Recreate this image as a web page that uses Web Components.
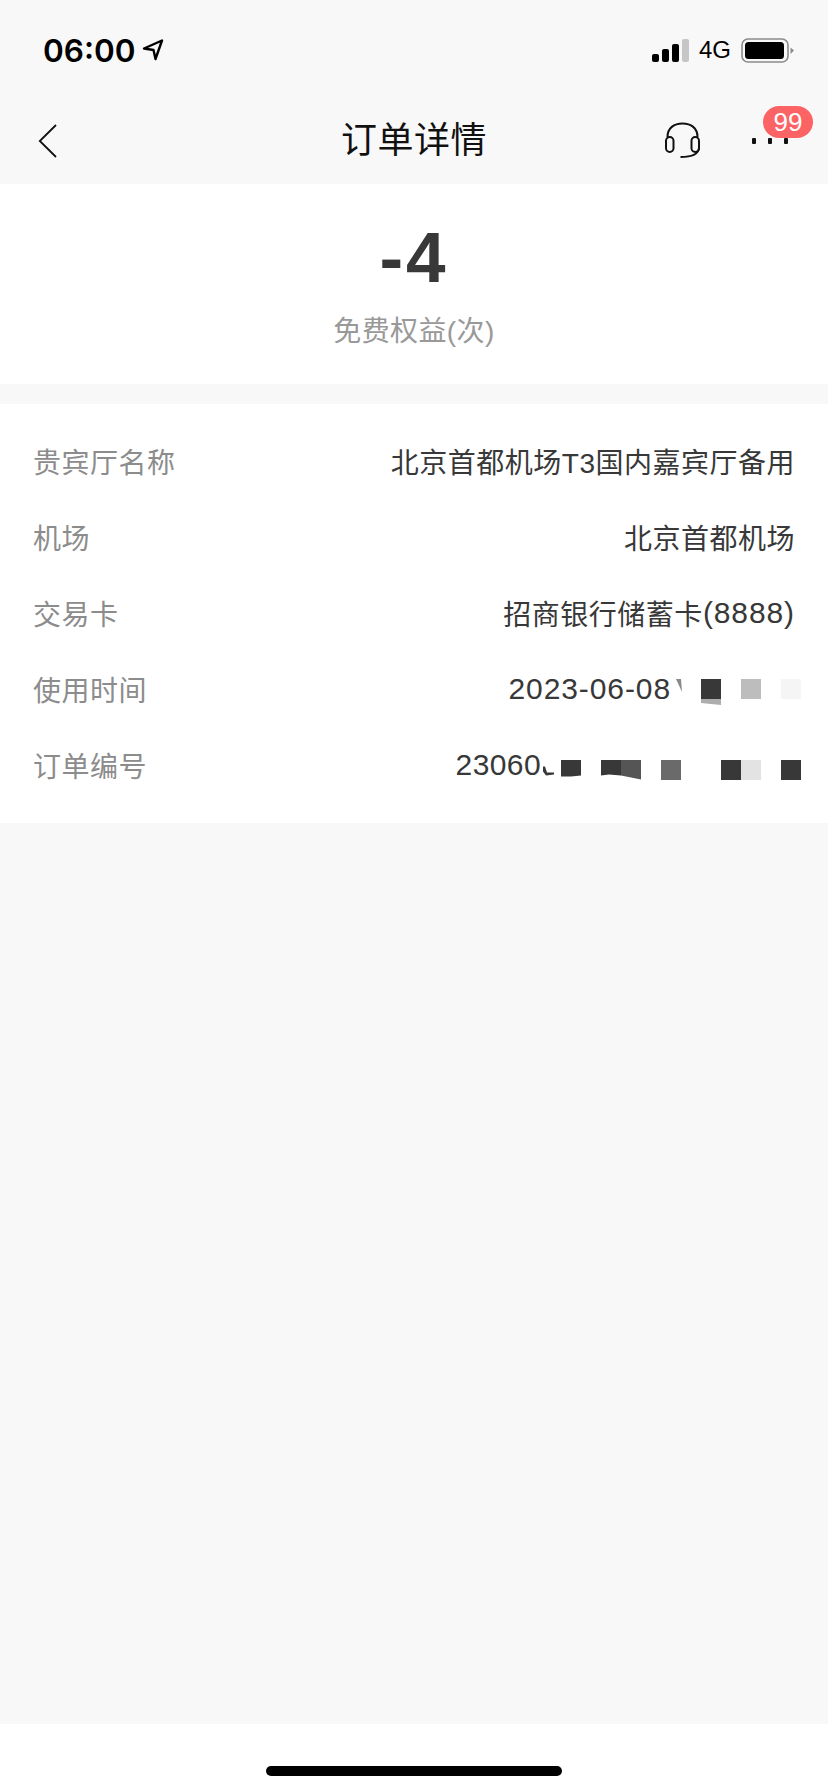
<!doctype html>
<html>
<head>
<meta charset="utf-8">
<style>
  html, body { margin: 0; height: 100%; }
  body {
    font-family: "Liberation Sans", "Noto Sans CJK SC", sans-serif;
    background: #f8f8f8;
  }
  order-page { height: 1792px; }
  .num { font-size: 30px; letter-spacing: .9px; }
  .num.tight { letter-spacing: .4px; }
</style>
</head>
<body>
<order-page>
  <status-bar></status-bar>
  <nav-bar title="订单详情" badge="99"></nav-bar>
  <summary-card amount="-4" caption="免费权益(次)"></summary-card>
  <detail-list>
    <detail-row label="贵宾厅名称">北京首都机场T3国内嘉宾厅备用</detail-row>
    <detail-row label="机场">北京首都机场</detail-row>
    <detail-row label="交易卡">招商银行储蓄卡<span class="num">(8888)</span></detail-row>
    <detail-row label="使用时间"><span class="num">2023-06-08</span><mosaic-strip cells="frag-a dark-b . mid . pale"></mosaic-strip></detail-row>
    <detail-row label="订单编号"><span class="num tight">23060</span><mosaic-strip style="margin-top:9px" cells="frag-b dark-c . dark-d gray5 . gray6 . . dark pale2 . dark"></mosaic-strip></detail-row>
  </detail-list>
  <home-bar></home-bar>
</order-page>

<script>
class OrderPage extends HTMLElement {
  constructor() {
    super();
    this.attachShadow({ mode: "open" }).innerHTML = `
      <style>
        :host { display: flex; flex-direction: column; }
        ::slotted(detail-list) { flex: 1; }
      </style>
      <slot></slot>`;
  }
}

class StatusBar extends HTMLElement {
  constructor() {
    super();
    this.attachShadow({ mode: "open" }).innerHTML = `
      <style>
        :host {
          display: flex; align-items: center; justify-content: space-between;
          height: 100px; padding: 0 33px 0 43px; color: #000;
        }
        .left, .right { display: flex; align-items: center; }
        .time { font-family: Inter, "Liberation Sans", sans-serif; font-size: 31.5px; font-weight: 600; }
        .arrow { margin-left: 6px; display: block; }
        .bars { display: flex; align-items: flex-end; gap: 3px; height: 23px; }
        .bars i { width: 7px; background: #000; border-radius: 2px; }
        .net { font-size: 24px; margin: 0 10px 0 10px; }
      </style>
      <div class="left">
        <span class="time">06:00</span>
        <svg class="arrow" width="22" height="22" viewBox="0 0 22 22" fill="none" stroke="#000" stroke-width="2.4" stroke-linejoin="round">
          <path d="M2 9.500 20 1.500 13.500 20 11.500 11Z"/>
        </svg>
      </div>
      <div class="right">
        <div class="bars">
          <i style="height:8px"></i><i style="height:13px"></i><i style="height:18px"></i><i style="height:23px;background:#c6c6c6"></i>
        </div>
        <span class="net">4G</span>
        <svg width="54" height="25" viewBox="0 0 54 25">
          <rect x="1" y="1" width="46" height="23" rx="6" fill="none" stroke="#8a8a8a" stroke-width="1.6"/>
          <rect x="4" y="4" width="39" height="17" rx="3.5" fill="#000"/>
          <path d="M49.500 9.500 53 12.500 49.500 16Z" fill="#8a8a8a"/>
        </svg>
      </div>`;
  }
}

class NavBar extends HTMLElement {
  constructor() {
    super();
    this.attachShadow({ mode: "open" }).innerHTML = `
      <style>
        :host {
          display: grid; grid-template-columns: 1fr auto 1fr; align-items: center;
          height: 84px; color: #111;
        }
        .back { margin: -2px 0 0 38px; display: block; }
        .title { font-size: 36px; line-height: 50px; margin-top: -2px; letter-spacing: .5px; }
        .actions { display: flex; justify-content: flex-end; align-items: center; position: relative; height: 100%; }
        .service { margin: -4px 51px 0 0; display: block; }
        .more { display: flex; gap: 12px; margin-right: 40px; margin-top: -2px; }
        .more i { width: 4px; height: 6px; background: #111; border-radius: 1px; }
        .badge {
          position: absolute; right: 15px; top: 6px; width: 50px; height: 32px; border-radius: 16px;
          background: #fb6365; color: #fff; font-size: 26px; line-height: 32px; text-align: center;
        }
      </style>
      <svg class="back" width="20" height="34" viewBox="0 0 20 34" fill="none" stroke="#111" stroke-width="1.800">
        <path d="M18 1 1.800 17 18 33"/>
      </svg>
      <div class="title"></div>
      <div class="actions">
        <svg class="service" width="37" height="37" viewBox="0 0 37 37" fill="none" stroke="#111" stroke-width="2">
          <path d="M3.500 15C3.500 6 10 1.500 18.500 1.500S33.500 6 33.500 15"/>
          <rect x="2" y="15" width="7.500" height="15" rx="3.700"/>
          <rect x="27.500" y="15" width="7.500" height="15" rx="3.700"/>
          <path d="M35 26C34.500 32 28 35 16.500 35"/>
        </svg>
        <div class="more"><i></i><i></i><i></i></div>
        <div class="badge"></div>
      </div>`;
    this.shadowRoot.querySelector(".title").textContent = this.getAttribute("title");
    this.shadowRoot.querySelector(".badge").textContent = this.getAttribute("badge");
  }
}

class SummaryCard extends HTMLElement {
  constructor() {
    super();
    this.attachShadow({ mode: "open" }).innerHTML = `
      <style>
        :host {
          display: flex; flex-direction: column; align-items: center;
          height: 200px; box-sizing: border-box; padding-top: 36px; background: #fff;
        }
        .amount { font-size: 71px; font-weight: 700; line-height: 76px; color: #383838; letter-spacing: 3px; }
        .caption { font-size: 28px; line-height: 40px; margin-top: 16px; color: #999; letter-spacing: .4px; }
      </style>
      <div class="amount"></div>
      <div class="caption"></div>`;
    this.shadowRoot.querySelector(".amount").textContent = this.getAttribute("amount");
    this.shadowRoot.querySelector(".caption").textContent = this.getAttribute("caption");
  }
}

class DetailList extends HTMLElement {
  constructor() {
    super();
    this.attachShadow({ mode: "open" }).innerHTML = `
      <style>
        :host { display: block; margin-top: 20px; }
        .box { background: #fff; padding: 19px 0 20px; }
      </style>
      <div class="box"><slot></slot></div>`;
  }
}

class DetailRow extends HTMLElement {
  constructor() {
    super();
    this.attachShadow({ mode: "open" }).innerHTML = `
      <style>
        :host {
          display: flex; align-items: center; justify-content: space-between;
          height: 76px; padding: 0 33px; font-size: 28px;
        }
        .label { color: #8c8c8c; letter-spacing: .5px; }
        .value { display: flex; align-items: center; color: #383838; letter-spacing: .5px; }
      </style>
      <span class="label"></span>
      <span class="value"><slot></slot></span>`;
    this.shadowRoot.querySelector(".label").textContent = this.getAttribute("label");
  }
}

// the blurred-out part of a number: one 20px cell per token, "." is an empty cell
const CELLS = {
  dark: "background:#383838",
  "dark-b": "height:26px;background:linear-gradient(#383838 20px,#adadad 20px);clip-path:polygon(0 0,100% 0,100% 100%,0 24px)",
  "dark-c": "background:#383838;clip-path:polygon(0 0,100% 0,100% 16px,50% 17px,0 17px)",
  "dark-d": "background:#383838;clip-path:polygon(0 0,100% 0,100% 16px,40% 15px,0 16px)",
  gray5: "background:#555;clip-path:polygon(0 0,100% 0,100% 100%,50% 18px,0 16px)",
  mid: "background:#bdbdbd",
  pale: "background:#f5f5f5",
  pale2: "background:#e3e3e3",
  gray6: "background:#6a6a6a",
  "frag-a": "width:30px;background:#8a8a8a;clip-path:polygon(5px 0,10px 0,11px 13px)",
  "frag-b": "background:#383838;clip-path:polygon(2px 7px,4px 7px,6px 13px,13px 13px,13px 15px,5px 16px,2px 12px)",
  ".": ""
};

class MosaicStrip extends HTMLElement {
  constructor() {
    super();
    const cells = this.getAttribute("cells").split(" ");
    const html = cells.map(c => `<i style="${CELLS[c]}"></i>`).join("");
    this.attachShadow({ mode: "open" }).innerHTML = `
      <style>
        :host { display: flex; margin-right: -6px; height: 20px; }
        i { display: block; width: 20px; height: 20px; flex: none; }
      </style>
      ${html}`;
  }
}

class HomeBar extends HTMLElement {
  constructor() {
    super();
    this.attachShadow({ mode: "open" }).innerHTML = `
      <style>
        :host { display: flex; justify-content: center; height: 68px; background: #fff; }
        i { width: 296px; height: 10px; margin-top: 42px; border-radius: 5px; background: #000; }
      </style>
      <i></i>`;
  }
}

customElements.define("order-page", OrderPage);
customElements.define("status-bar", StatusBar);
customElements.define("nav-bar", NavBar);
customElements.define("summary-card", SummaryCard);
customElements.define("detail-list", DetailList);
customElements.define("detail-row", DetailRow);
customElements.define("mosaic-strip", MosaicStrip);
customElements.define("home-bar", HomeBar);
</script>
</body>
</html>
